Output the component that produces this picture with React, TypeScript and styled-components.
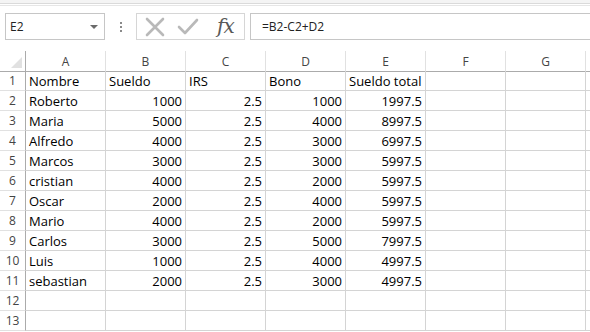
import React from "react";
import styled, { createGlobalStyle } from "styled-components";

const Global = createGlobalStyle`
  html, body { margin: 0; padding: 0; background: #ffffff; }
  body { font-family: "Open Sans", "Liberation Sans", sans-serif; overflow: hidden; }
`;

const Page = styled.div`
  width: 590px;
  height: 332px;
  overflow: hidden;
  display: flex;
  flex-direction: column;
  background: #ffffff;
`;

const TopStrip = styled.div`
  height: 3px;
  background: #f4f4f4;
  border-bottom: 1px solid #dadada;
  flex: none;
`;

const TopLine = styled.div`
  height: 1px;
  margin-top: 1px;
  background: #e6e6e6;
  flex: none;
`;

const FormulaBar = styled.div`
  display: flex;
  align-items: stretch;
  height: 27px;
  margin-top: 7px;
  flex: none;
`;

const NameBox = styled.div`
  margin-left: 5px;
  width: 100px;
  border: 1px solid #c6c6c6;
  display: flex;
  align-items: center;
  justify-content: space-between;
  padding: 0 6px 0 4px;
  box-sizing: border-box;
  font-size: 12px;
  color: #222;
`;

const Arrow = styled.span`
  width: 0;
  height: 0;
  border-left: 4px solid transparent;
  border-right: 4px solid transparent;
  border-top: 4px solid #6a6a6a;
`;

const Dots = styled.div`
  width: 31px;
  display: flex;
  flex-direction: column;
  align-items: center;
  justify-content: center;
  gap: 2px;
  & > i {
    width: 2px;
    height: 2px;
    background: #8a8a8a;
    display: block;
  }
`;

const Buttons = styled.div`
  width: 109px;
  border: 1px solid #d6d6d6;
  box-sizing: border-box;
  display: flex;
  align-items: center;
  padding-left: 8px;
  gap: 12px;
`;

const Fx = styled.span`
  font-family: "DejaVu Serif", "Liberation Serif", serif;
  font-style: italic;
  font-size: 20px;
  line-height: 1;
  color: #595959;
  margin-left: 6px;
  letter-spacing: -1px;
  margin-top: -2px;
`;

const FormulaInput = styled.div`
  margin-left: 5px;
  flex: 1;
  border: 1px solid #c6c6c6;
  border-right: none;
  display: flex;
  align-items: center;
  padding-left: 11px;
  font-size: 12px;
  color: #222;
`;

const Grid = styled.div`
  margin-top: 11px;
  display: grid;
  grid-template-columns: 26px repeat(8, 80px);
  grid-auto-rows: 20px;
  font-size: 13px;
`;

const Corner = styled.div`
  border-right: 1px solid #ababab;
  border-bottom: 1px solid #ababab;
  height: 20px;
  position: relative;
  &::after {
    content: "";
    position: absolute;
    right: 3px;
    bottom: 3px;
    width: 0;
    height: 0;
    border-left: 11px solid transparent;
    border-bottom: 11px solid #e1e1e1;
  }
`;

const ColHead = styled.div`
  height: 20px;
  border-bottom: 1px solid #ababab;
  border-right: 1px solid #e1e1e1;
  display: flex;
  align-items: center;
  justify-content: center;
  color: #444;
  font-size: 12px;
  box-sizing: content-box;
`;

const RowHead = styled.div`
  border-right: 1px solid #ababab;
  border-bottom: 1px solid #e1e1e1;
  display: flex;
  align-items: center;
  justify-content: center;
  color: #444;
  font-size: 12px;
  box-sizing: border-box;
`;

const Cell = styled.div<{ $num?: boolean }>`
  border-right: 1px solid #d4d4d4;
  border-bottom: 1px solid #d4d4d4;
  box-sizing: border-box;
  display: flex;
  align-items: center;
  justify-content: ${(p) => (p.$num ? "flex-end" : "flex-start")};
  padding: 0 3px;
  color: #000;
  white-space: nowrap;
  overflow: visible;
`;

const cols = ["A", "B", "C", "D", "E", "F", "G", ""];

const data: (string | number)[][] = [
  ["Nombre", "Sueldo", "IRS", "Bono", "Sueldo total"],
  ["Roberto", 1000, 2.5, 1000, 1997.5],
  ["Maria", 5000, 2.5, 4000, 8997.5],
  ["Alfredo", 4000, 2.5, 3000, 6997.5],
  ["Marcos", 3000, 2.5, 3000, 5997.5],
  ["cristian", 4000, 2.5, 2000, 5997.5],
  ["Oscar", 2000, 2.5, 4000, 5997.5],
  ["Mario", 4000, 2.5, 2000, 5997.5],
  ["Carlos", 3000, 2.5, 5000, 7997.5],
  ["Luis", 1000, 2.5, 4000, 4997.5],
  ["sebastian", 2000, 2.5, 3000, 4997.5],
  [],
  [],
];

const CrossIcon = () => (
  <svg width="20" height="20" viewBox="0 0 20 20">
    <path d="M2 2 L18 18 M18 2 L2 18" stroke="#b9b9b9" strokeWidth="2.6" strokeLinecap="round" fill="none" />
  </svg>
);

const CheckIcon = () => (
  <svg width="22" height="18" viewBox="0 0 22 18">
    <path d="M2 9 L8 15 L20 2" stroke="#b9b9b9" strokeWidth="2.6" strokeLinecap="round" strokeLinejoin="round" fill="none" />
  </svg>
);

export default function App() {
  return (
    <Page>
      <Global />
      <TopStrip />
      <TopLine />
      <FormulaBar>
        <NameBox>
          <span>E2</span>
          <Arrow />
        </NameBox>
        <Dots>
          <i />
          <i />
          <i />
        </Dots>
        <Buttons>
          <CrossIcon />
          <CheckIcon />
          <Fx>fx</Fx>
        </Buttons>
        <FormulaInput>=B2-C2+D2</FormulaInput>
      </FormulaBar>
      <Grid>
        <Corner />
        {cols.map((c, i) => (
          <ColHead key={i}>{c}</ColHead>
        ))}
        {data.map((row, r) => (
          <React.Fragment key={r}>
            <RowHead>{r + 1}</RowHead>
            {cols.map((_, c) => {
              const v = row[c];
              return (
                <Cell key={c} $num={typeof v === "number"}>
                  {v === undefined ? "" : String(v)}
                </Cell>
              );
            })}
          </React.Fragment>
        ))}
      </Grid>
    </Page>
  );
}
